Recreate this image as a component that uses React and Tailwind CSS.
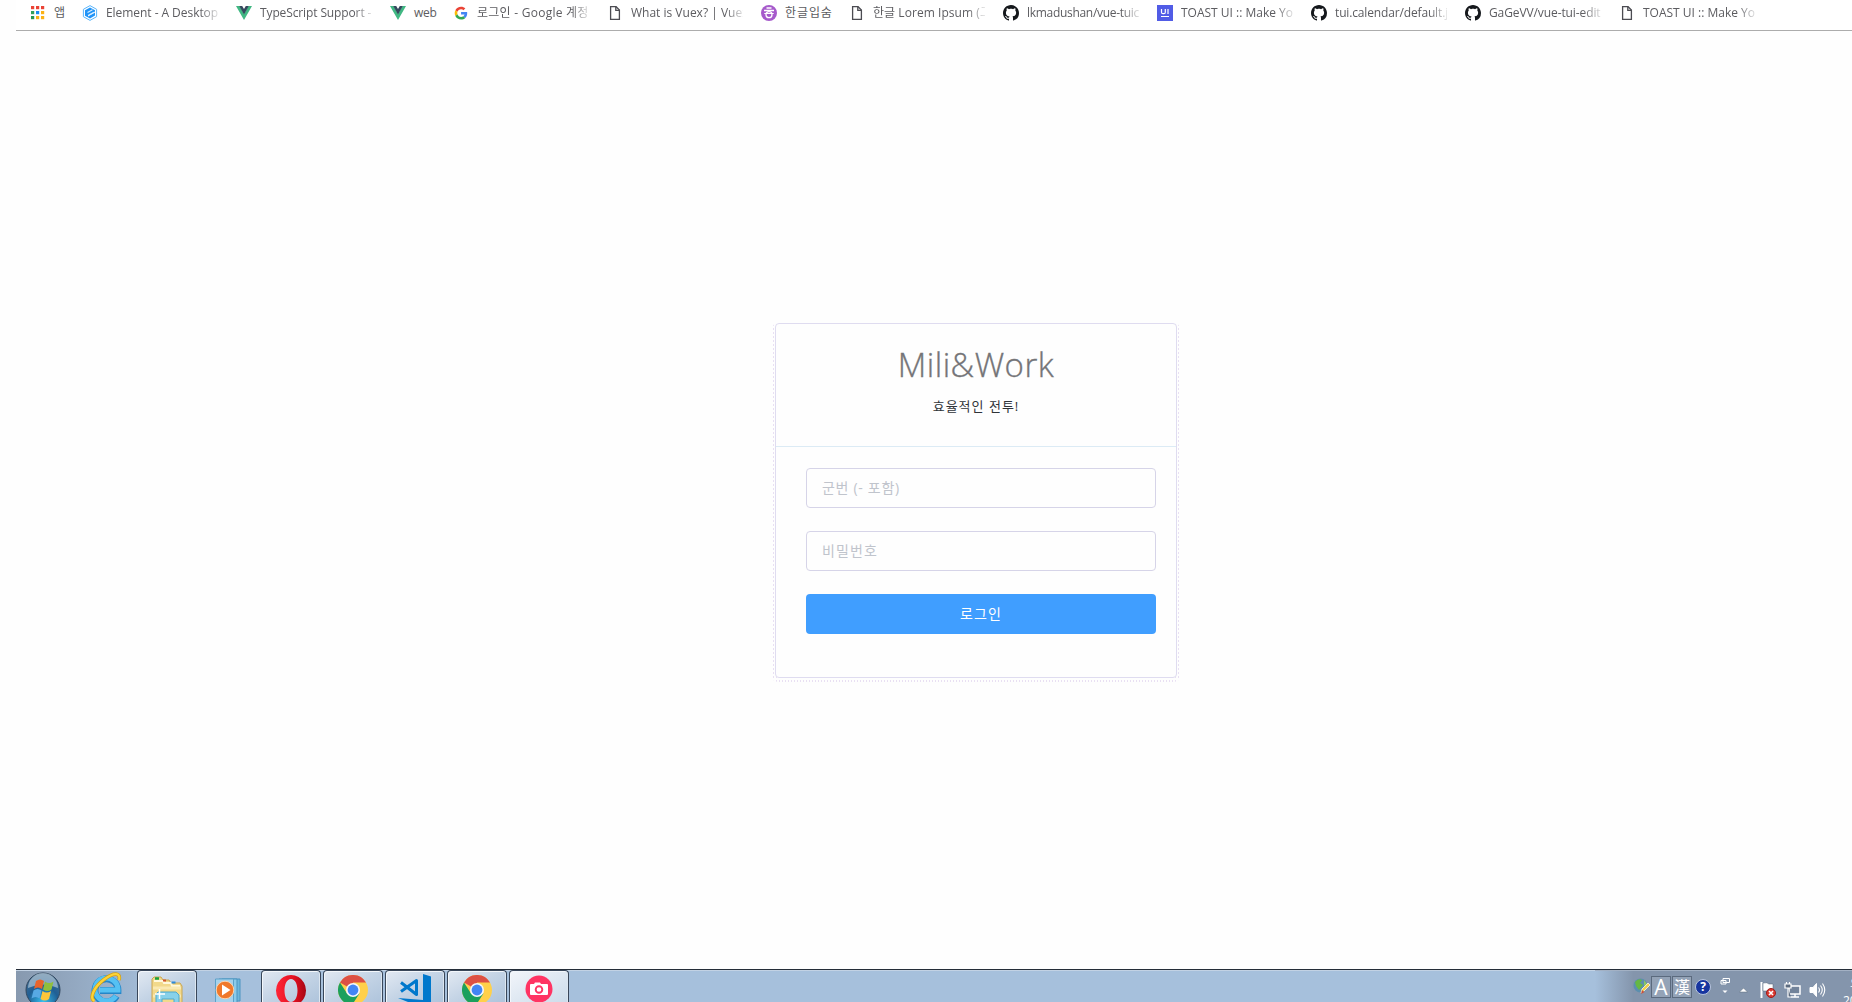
import React from "react";

const KR = "font-['Open_Sans','Noto_Sans_CJK_KR',sans-serif]";

function AppsIcon() {
  const c = ["#ea4335", "#ea4335", "#ea4335", "#34a05a", "#1a8cf0", "#fbb215", "#2a9550", "#fbb215", "#fbb215"];
  return (
    <svg width="16" height="16" viewBox="0 0 16 16">
      {c.map((f, i) => (
        <rect key={i} x={1 + (i % 3) * 5} y={1 + Math.floor(i / 3) * 5} width="3.2" height="3.2" fill={f} />
      ))}
    </svg>
  );
}
function ElementIcon() {
  return (
    <svg width="16" height="16" viewBox="0 0 16 16">
      <path d="M8 .6 14.6 4.3v7.4L8 15.4 1.4 11.7V4.3z" fill="#fff" stroke="#5ab5fb" strokeWidth="1" />
      <path d="M8 2.4 13 5.2v1.2L6 10.3v1.2l7-3.9v2.9L8 13.5 3 10.7V5.3z" fill="#2094f8" />
      <path d="M5.5 7.5 10.5 4.8M6.5 10.3 12 7.2" stroke="#d5ecff" strokeWidth="1.1" />
    </svg>
  );
}
function VueIcon() {
  return (
    <svg width="16" height="16" viewBox="0 0 16 16">
      <path d="M0 1h3.5L8 8.8 12.5 1H16L8 15z" fill="#41b883" />
      <path d="M3.2 1h3L8 4.1 9.8 1h3L8 9.4z" fill="#35495e" />
    </svg>
  );
}
function GoogleIcon() {
  return (
    <svg width="16" height="16" viewBox="0 0 48 48">
      <g transform="translate(5 5) scale(.8)">
        <path fill="#EA4335" d="M24 9.5c3.5 0 6.7 1.2 9.2 3.6l6.9-6.9C35.9 2.4 30.5 0 24 0 14.6 0 6.5 5.4 2.6 13.2l8 6.2C12.4 13.7 17.7 9.5 24 9.5z" />
        <path fill="#4285F4" d="M47 24.5c0-1.6-.2-3.1-.4-4.500H24v9h12.900c-.6 3-2.300 5.500-4.800 7.200l7.700 6C44.400 38 47 31.800 47 24.500z" />
        <path fill="#FBBC05" d="M10.500 28.600A14.500 14.500 0 0 1 9.800 24c0-1.600.3-3.100.8-4.600l-8-6.200A24 24 0 0 0 0 24c0 3.900.9 7.500 2.600 10.800z" />
        <path fill="#34A853" d="M24 48c6.500 0 11.900-2.100 15.900-5.800l-7.700-6c-2.200 1.500-4.900 2.300-8.200 2.300-6.300 0-11.600-4.200-13.500-9.900l-8 6.200C6.500 42.600 14.600 48 24 48z" />
      </g>
    </svg>
  );
}
function FileIcon() {
  return (
    <svg width="16" height="16" viewBox="0 0 16 16" fill="none" stroke="#4c4c52" strokeWidth="1.3">
      <path d="M3.600 1.700h5.500l3.300 3.300v9.300H3.600z" />
      <path d="M8.800 1.700v3.600h3.600" />
    </svg>
  );
}
function LipsumIcon() {
  return (
    <svg width="16" height="16" viewBox="0 0 16 16">
      <circle cx="8" cy="8" r="8" fill="#a65acb" />
      <path d="M5.500 3h5M3 5.500h10" stroke="#fff" strokeWidth="1.3" />
      <circle cx="8" cy="9.700" r="3" fill="none" stroke="#fff" strokeWidth="1.300" />
      <path d="M3.300 8.500h9.400" stroke="#fff" strokeWidth="1" />
    </svg>
  );
}
function GithubIcon() {
  return (
    <svg width="16" height="16" viewBox="0 0 16 16" fill="#15181c">
      <path d="M8 0C3.580 0 0 3.580 0 8c0 3.540 2.290 6.530 5.470 7.590.4.070.55-.17.55-.38 0-.19-.01-.82-.01-1.490-2.010.37-2.530-.49-2.690-.94-.09-.23-.48-.94-.82-1.130-.28-.15-.68-.52-.01-.53.63-.01 1.080.58 1.230.82.72 1.210 1.870.87 2.330.66.070-.52.28-.87.51-1.070-1.780-.2-3.640-.89-3.640-3.950 0-.87.31-1.590.82-2.150-.08-.2-.36-1.020.08-2.120 0 0 .67-.21 2.200.82.64-.18 1.320-.27 2-.27s1.360.09 2 .27c1.530-1.040 2.200-.82 2.200-.82.44 1.100.16 1.920.08 2.120.51.56.82 1.270.82 2.150 0 3.070-1.870 3.750-3.650 3.950.29.25.54.73.54 1.480 0 1.070-.01 1.930-.01 2.200 0 .21.15.46.55.38A8.010 8.010 0 0 0 16 8c0-4.420-3.580-8-8-8z" />
    </svg>
  );
}
function ToastIcon() {
  return (
    <svg width="16" height="16" viewBox="0 0 16 16">
      <rect width="16" height="16" fill="#515ce6" />
      <path d="M4.500 4v3.200q0 1.500 1.500 1.500h.8q1.500 0 1.500-1.500V4M11 4v5M4 11.500h8" stroke="#fff" strokeWidth="1.200" fill="none" />
    </svg>
  );
}

const bookmarks = [
  [AppsIcon, "앱", "w-[10px]", false, "tracking-[0px]"],
  [ElementIcon, "Element - A Desktop", "w-[112px]", true, "tracking-[-0.05px]"],
  [VueIcon, "TypeScript Support - V", "w-[112px]", true, "tracking-[-0.12px]"],
  [VueIcon, "web", "w-[21px]", false, "tracking-[-0.3px]"],
  [GoogleIcon, "로그인 - Google 계정", "w-[112px]", true, "tracking-[0.25px]"],
  [FileIcon, "What is Vuex? | Vuex", "w-[112px]", true, "tracking-[0px]"],
  [LipsumIcon, "한글입숨", "w-[46px]", false, "tracking-[0.9px]"],
  [FileIcon, "한글 Lorem Ipsum (그", "w-[112px]", true, "tracking-[0.05px]"],
  [GithubIcon, "lkmadushan/vue-tuic", "w-[112px]", true, "tracking-[-0.3px]"],
  [ToastIcon, "TOAST UI :: Make You", "w-[112px]", true, "tracking-[0px]"],
  [GithubIcon, "tui.calendar/default.j", "w-[112px]", true, "tracking-[-0.15px]"],
  [GithubIcon, "GaGeVV/vue-tui-edit", "w-[112px]", true, "tracking-[-0.1px]"],
  [FileIcon, "TOAST UI :: Make You", "w-[112px]", true, "tracking-[0px]"],
];

function BookmarkBar() {
  return (
    <nav className="ml-4 flex h-[31px] items-start gap-[18px] border-b border-[#acacac] bg-white pl-[14px] pt-[5px]">
      {bookmarks.map(([Icon, label, width, fade, tracking], i) => (
        <a key={i} className="flex shrink-0 items-center gap-2">
          <Icon />
          <span
            className={`${width} ${tracking} ${fade ? "overflow-hidden [mask-image:linear-gradient(to_right,#000_94px,transparent_116px)]" : ""} whitespace-nowrap text-[12px] leading-4 text-[#5c5c60]`}
          >
            {label}
          </span>
        </a>
      ))}
    </nav>
  );
}

function LoginCard() {
  return (
    <section className="mt-[292px] ml-[772px] w-[408px] rounded-md bg-[radial-gradient(circle,#e9e0f3_0.7px,transparent_0.8px)] bg-[size:3px_4px] px-[3px] pb-1">
      <div className="h-[355px] rounded border border-[#dfdcf0] bg-[#fefefe]">
        <header className="flex h-[123px] flex-col items-center border-b border-[#dcebf5] pt-5">
          <h1 className="text-[33px] font-light leading-[42px] tracking-[0.5px] text-[#747477] [-webkit-text-stroke:0.35px_#747477]">Mili&amp;Work</h1>
          <p className="mt-[12px] text-[13px] leading-4 tracking-[1px] text-[#2f3338]">효율적인 전투!</p>
        </header>
        <form className="flex flex-col gap-[23px] pl-[30px] pr-5 pt-[21px]">
          <input
            className="h-10 w-[350px] rounded border border-[#d6d4e8] bg-[#fefefe] px-[15px] pb-px text-[14px] tracking-[0.7px] placeholder:text-[#c0c4cc]"
            placeholder="군번 (- 포함)"
          />
          <input
            className="h-10 w-[350px] rounded border border-[#d6d4e8] bg-[#fefefe] px-[15px] pb-px text-[14px] tracking-[1.1px] placeholder:text-[#c0c4cc]"
            placeholder="비밀번호"
          />
          <button type="button" className="h-10 w-[350px] rounded bg-[#409eff] pb-px text-[14px] tracking-[1.1px] text-white">
            로그인
          </button>
        </form>
      </div>
    </section>
  );
}

function StartOrb() {
  return (
    <svg width="36" height="36" viewBox="0 0 36 36">
      <defs>
        <radialGradient id="orb" cx=".5" cy=".85" r=".9">
          <stop offset="0" stopColor="#36c0f0" />
          <stop offset=".5" stopColor="#1f5f95" />
          <stop offset="1" stopColor="#506f8c" />
        </radialGradient>
      </defs>
      <circle cx="18" cy="18" r="17" fill="url(#orb)" stroke="#31475f" />
      <path d="M3 16A15 15 0 0 1 33 16Q18 9 3 16z" fill="#c3d5e2" opacity=".6" />
      <path d="M11 9q4-3 8 0l-2 8q-4-3-8 0z" fill="#e8642b" />
      <path d="M20 9.500q4 3 8.500 0l-2 8q-4 3-8.500 0z" fill="#90bf3c" />
      <path d="M8.500 18.500q4-3 8 0l-2 8q-4-3-8 0z" fill="#57a9e4" />
      <path d="M17.500 19q4 3 8.500 0l-2 8q-4 3-8.500 0z" fill="#fcc63a" />
    </svg>
  );
}
function IEIcon() {
  return (
    <svg width="32" height="32" viewBox="0 0 32 32">
      <path d="M26.500 24A11.500 11.500 0 1 1 28 18.500H10" fill="none" stroke="#2486c9" strokeWidth="6.800" />
      <path d="M26 24A11.500 11.500 0 1 1 28 18H10" fill="none" stroke="#55c1f3" strokeWidth="5" />
      <path d="M4.500 29C-1 26 4 15 14 7.500S31 .5 29 8" fill="none" stroke="#d39e12" strokeWidth="3.600" />
      <path d="M4.500 29C-1 26 4 15 14 7.500S31 .5 29 8" fill="none" stroke="#fbd338" strokeWidth="2.200" />
    </svg>
  );
}
function ExplorerIcon() {
  return (
    <svg className="mt-[2px]" width="32" height="32" viewBox="0 0 32 32">
      <path d="M1 32V3l2-2h7l2 3h6l2 3h9l2 3v22z" fill="#f2d98b" stroke="#c9a652" />
      <path d="M3 5h9l1 2h7l1 3h8" fill="none" stroke="#fff8dc" strokeWidth="2" />
      <path d="M4 2.500h4" stroke="#18a13a" strokeWidth="2.500" />
      <path d="M12 4.500h3" stroke="#d4572e" strokeWidth="2" />
      <path d="M20.500 6.500h4" stroke="#2e8ad8" strokeWidth="2" />
      <path d="M2 12h28M2 20h28" stroke="#fae9b2" strokeWidth="3" />
      <path d="M5 32V18l2-2h18l3 3v13h-5v-9H11v9z" fill="#87d1ea" stroke="#4fa8cb" />
      <path d="M8.500 13v10M4 18h10" stroke="#fff" strokeWidth="1.500" />
    </svg>
  );
}
function MediaIcon() {
  return (
    <svg width="28" height="28" viewBox="0 0 28 28">
      <path d="M8 1h18v22H8z" fill="#6db7dd" stroke="#4c94bf" />
      <path d="M5 1h18v24H5z" fill="#8bcbea" stroke="#4c94bf" />
      <path d="M1.500 1h18v27h-18z" fill="#a5d2ec" stroke="#5ca1c9" />
      <circle cx="11" cy="12" r="8.800" fill="#f0782a" stroke="#fbd3ae" />
      <path d="M8 6.500v11l8.500-5.500z" fill="#fff" />
    </svg>
  );
}
function OperaIcon() {
  return (
    <svg width="32" height="32" viewBox="0 0 32 32">
      <defs>
        <linearGradient id="op" x2="1">
          <stop offset="0" stopColor="#ff2637" />
          <stop offset=".6" stopColor="#e20f20" />
          <stop offset="1" stopColor="#a60714" />
        </linearGradient>
      </defs>
      <path fillRule="evenodd" fill="url(#op)" d="M16 1a15 15.500 0 1 0 .01 0zM16 5c4 0 6.500 5 6.500 11.500S20 28 16 28 9.500 23 9.500 16.500 12 5 16 5z" />
    </svg>
  );
}
function ChromeIcon() {
  return (
    <svg className="mt-px" width="30" height="30" viewBox="0 0 30 30">
      <circle cx="15" cy="15" r="15" fill="#ffd04a" />
      <path d="M15 15 2 7.500A15 15 0 0 1 28 7.500H15z" fill="#dd5044" />
      <path d="M2 7.500A15 15 0 0 0 14 30l7.500-11.500H9z" fill="#1ba05d" />
      <circle cx="15" cy="15" r="7" fill="#f4f6fb" />
      <circle cx="15" cy="15" r="5.400" fill="#4285f4" />
    </svg>
  );
}
function CodeIcon() {
  return (
    <svg className="shrink-0" width="34" height="34" viewBox="0 0 34 34" fill="#0078cc">
      <path d="M25 0 33 2.500v28L25 34z" />
      <path d="M0 24l25 2v8z" />
      <path d="M3 8.500 18.500 20.500V6.500L3 17.500" fill="none" stroke="#0078cc" strokeWidth="3" strokeLinejoin="round" />
    </svg>
  );
}
function CameraIcon() {
  return (
    <svg className="mt-px" width="28" height="28" viewBox="0 0 28 28">
      <circle cx="14" cy="14" r="13.500" fill="#ff3463" />
      <path d="M6 9h3l1-1.500h5L16 9h6q1 0 1 1v9q0 1-1 1H6q-1 0-1-1v-9q0-1 1-1z" fill="#fff" />
      <circle cx="14" cy="14.500" r="3.300" fill="#fff" stroke="#ff3463" strokeWidth="1.900" />
    </svg>
  );
}

function TaskButton({ children, active }) {
  return (
    <div
      className={`flex h-[34px] w-[60px] justify-center overflow-hidden rounded-t-sm border-x border-t border-[#39475a] ${active ? "bg-gradient-to-br from-[#f2f5fa] to-[#cbdbea]" : "bg-gradient-to-br from-[#e2e9f2] via-[#c3d3e5] to-[#adc3db]"} pt-[3px] shadow-[inset_1px_1px_0_#f3f7fb,inset_-1px_0_0_#dce6f0]`}
    >
      {children}
    </div>
  );
}

function Tray() {
  return (
    <div className="flex h-8 w-[257px] items-start overflow-hidden bg-gradient-to-r from-[#a6c0dc] via-[#8495ac] via-15% to-[#8495ac] pl-[38px] text-white shadow-[inset_0_1px_0_#a3b1c4] [&>*]:shrink-0">
      <svg className="mt-[8px]" width="17" height="17" viewBox="0 0 17 17">
        <circle cx="7.500" cy="7.500" r="7" fill="#5b8fae" />
        <path d="M2 4q3-4 7-2l-2 3 3 2-4 5-3-4z" fill="#65b743" />
        <path d="M11 2l3 4-3 2z" fill="#8cc762" />
        <path d="m8 15 1-4 6-6 2 2-6 6z" fill="#f2d24c" stroke="#fff" strokeWidth=".7" />
        <path d="m8 16 1-4 2.500 2z" fill="#c5503b" />
      </svg>
      <div className="ml-[1px] mt-[6px] flex h-[22px] w-[20px] items-center justify-center border border-[#5b6a7e] bg-[#94a3b7] text-[21px] leading-none">
        A
      </div>
      <div className="ml-px mt-[6px] flex h-[22px] w-[20px] items-center justify-center border border-[#5b6a7e] bg-[#94a3b7] text-[16px] leading-none">
        漢
      </div>
      <div className="ml-[3px] mt-[9px] flex size-4 items-center justify-center rounded-full border border-[#b9c6de] bg-[#17359f] text-[12px] font-bold leading-none">
        ?
      </div>
      <svg className="ml-[9px] mt-[7px]" width="11" height="18" viewBox="0 0 11 18">
        <path d="M3 1.500h6.500v4H3zM1 3.500h5v3.500H1z" fill="#8495ac" stroke="#fff" />
        <path d="M2.500 13.500h5L5 16z" fill="#fff" />
      </svg>
      <svg className="ml-2 mt-[17px]" width="9" height="6" viewBox="0 0 9 6">
        <path d="M.5 5 4.500 1l4 4z" fill="#fff" stroke="#59687b" strokeWidth=".5" />
      </svg>
      <svg className="ml-[12px] mt-[11px]" width="17" height="18" viewBox="0 0 17 18">
        <path d="M1.500 1v16" stroke="#fff" strokeWidth="2" />
        <path d="M3 2q4-1 6 1h4v7H3z" fill="#fff" stroke="#536276" strokeWidth=".5" />
        <circle cx="11" cy="12" r="4.500" fill="#dc3b32" stroke="#9f1c1a" />
        <path d="m9 10 4 4m0-4-4 4" stroke="#fff" strokeWidth="1.600" />
      </svg>
      <svg className="ml-[7px] mt-[11px]" width="17" height="18" viewBox="0 0 17 18">
        <path d="M5 5h11v8H5zM7 16h8M11 13v3" fill="#72839a" stroke="#fff" strokeWidth="1.500" />
        <path d="M1 3h6v4H1zM2.500 3V1M5.500 3V1M4 7v9h3" fill="#5d6c80" stroke="#fff" strokeWidth="1.200" />
      </svg>
      <svg className="ml-[8px] mt-[12px]" width="17" height="16" viewBox="0 0 17 16" fill="none" stroke="#fff">
        <path d="M1 5.500h3l3.500-4v13L4 10.500H1z" fill="#fff" />
        <path d="M9.500 5.500q2 2.500 0 5M11.500 3.500q3.500 4.500 0 9M13.500 1.500q4.500 6.500 0 13" strokeWidth="1.100" />
      </svg>
      <div className="ml-[17px] mt-[9px] text-[12px] leading-[17px]">
        <div className="-mt-1 ml-[7px]">오전</div>
        <div>2019</div>
      </div>
    </div>
  );
}

function Taskbar() {
  return (
    <footer className="ml-4 flex h-[33px] items-start overflow-hidden border-t border-[#252d38] bg-gradient-to-r from-[#8799af] via-[#a6c0dc] via-8% to-[#a6c0dc] shadow-[inset_0_1px_0_#c2d2e4]">
      <div className="ml-[9px] mt-[2px]"><StartOrb /></div>
      <div className="ml-[29px] mt-[2px]"><IEIcon /></div>
      <div className="ml-[15px]"><TaskButton><ExplorerIcon /></TaskButton></div>
      <div className="ml-[17px] mt-[8px]"><MediaIcon /></div>
      <div className="ml-[19px] flex gap-[2px]">
        <TaskButton><OperaIcon /></TaskButton>
        <TaskButton><ChromeIcon /></TaskButton>
        <TaskButton><CodeIcon /></TaskButton>
        <TaskButton><ChromeIcon /></TaskButton>
        <TaskButton active><CameraIcon /></TaskButton>
      </div>
      <div className="ml-auto"><Tray /></div>
    </footer>
  );
}

export default function App() {
  return (
    <div className={`${KR} flex h-[1002px] w-[1852px] flex-col overflow-hidden bg-[#fefefe]`}>
      <BookmarkBar />
      <main className="flex-1">
        <LoginCard />
      </main>
      <Taskbar />
    </div>
  );
}
